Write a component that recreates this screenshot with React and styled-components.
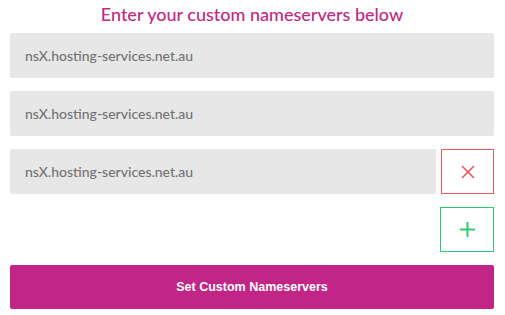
import React from "react";
import styled, { createGlobalStyle } from "styled-components";

const Global = createGlobalStyle`
  html, body { margin: 0; padding: 0; background: #fff; }
  body { font-family: Lato, "Open Sans", sans-serif; }
`;

const Wrap = styled.div`
  width: 505px;
  box-sizing: border-box;
  padding: 3px 11px 0 10px;
  display: flex;
  flex-direction: column;
`;

const Title = styled.h2`
  margin: 0 0 8px;
  font-family: Lato, sans-serif;
  font-weight: 500;
  font-size: 18px;
  line-height: 22px;
  color: #c2287f;
  text-align: center;
`;

const Row = styled.div`
  display: flex;
  gap: 5px;
  margin-bottom: 13px;
  justify-content: flex-end;
`;

const Field = styled.div`
  flex: 1;
  height: 45px;
  background: #e7e7e7;
  border-radius: 2px;
  display: flex;
  align-items: center;
  padding-left: 15px;
  font-family: Lato, sans-serif;
  font-weight: 500;
  font-size: 14px;
  color: #737373;
`;

const IconButton = styled.button`
  width: ${(p) => p.$w}px;
  height: 45px;
  box-sizing: border-box;
  border: 1px solid ${(p) => p.$color};
  background: #fff;
  display: flex;
  align-items: center;
  justify-content: center;
  padding: 0;
  margin: 0;
`;

const Submit = styled.button`
  height: 44px;
  border: none;
  border-radius: 2px;
  background: #c12686;
  color: #fff;
  font-family: "Liberation Sans", Arial, sans-serif;
  font-weight: bold;
  font-size: 12.5px;
  margin: 0;
`;

const Cross = () => (
  <svg width="14" height="14" viewBox="0 0 14 14">
    <path d="M1 1 L13 13 M13 1 L1 13" stroke="#f0505a" strokeWidth="1.6" fill="none" />
  </svg>
);

const Plus = () => (
  <svg width="15" height="15" viewBox="0 0 15 15">
    <path d="M7.5 0 V15 M0 7.5 H15" stroke="#2ecc71" strokeWidth="2" fill="none" />
  </svg>
);

export default function App() {
  return (
    <>
      <Global />
      <Wrap>
        <Title>Enter your custom nameservers below</Title>
        <Row><Field>nsX.hosting-services.net.au</Field></Row>
        <Row><Field>nsX.hosting-services.net.au</Field></Row>
        <Row>
          <Field>nsX.hosting-services.net.au</Field>
          <IconButton $w={53} $color="#e85a5a" aria-label="remove"><Cross /></IconButton>
        </Row>
        <Row>
          <IconButton $w={54} $color="#2ecc71" aria-label="add"><Plus /></IconButton>
        </Row>
        <Submit>Set Custom Nameservers</Submit>
      </Wrap>
    </>
  );
}
